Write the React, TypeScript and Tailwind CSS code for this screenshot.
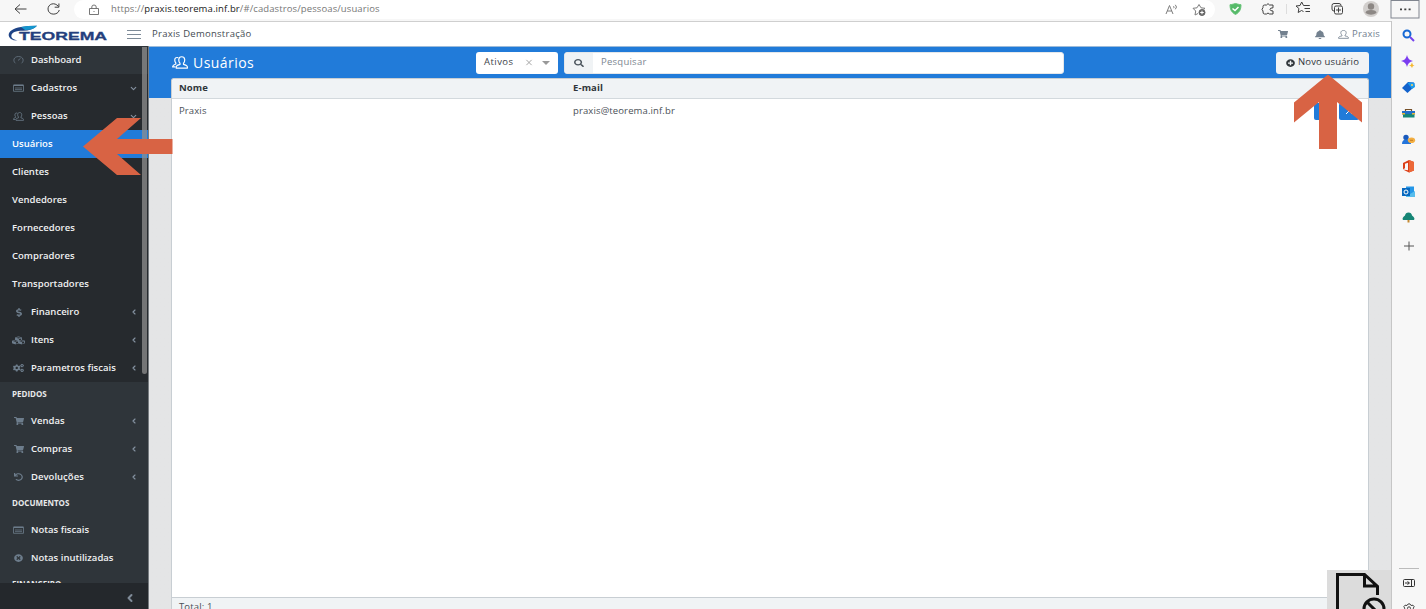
import * as React from "react";
import {
  FaBell,
  FaCogs,
  FaCubes,
  FaPlusCircle,
  FaSearch,
  FaShoppingCart,
  FaUndo,
  FaDollarSign,
  FaTimesCircle,
} from "react-icons/fa";
import { ChevronDown, ChevronLeft } from "lucide-react";

type IconProps = { className?: string; preserveAspectRatio?: string };

function PeopleIcon({ className }: IconProps) {
  return (
    <svg viewBox="0 0 16 14" preserveAspectRatio="none" fill="none" stroke="currentColor" strokeWidth="1.200" className={className}>
      <path d="M4.300 13h11c.5-2.400-.5-2.800-3.800-4V7.800c1-1 1.300-2.300 1.200-4C12.500 1.900 11.400.8 9.700.8S6.900 1.900 6.800 3.800c-.1 1.700.2 3 1.200 4V9c-3.300 1.200-4.200 1.600-3.700 4Z" />
      <path d="M6.300 1.800C4 1 2.600 2.400 2.800 4.700c0 1.300.3 2 1 2.700v1.100C1.500 9.500.4 10 .7 11.700h2.800" />
    </svg>
  );
}

function UserIcon({ className }: IconProps) {
  return (
    <svg viewBox="0 0 12 12" preserveAspectRatio="none" fill="none" stroke="currentColor" className={className}>
      <path d="M.6 11.100h10.800c.3-1.800-.8-2.300-3.800-3.300v-1C8.600 6 9 4.800 8.900 3.300 8.700 1.600 7.700.6 6 .6S3.300 1.600 3.100 3.300C3 4.800 3.400 6 4.400 6.800v1C1.400 8.800.3 9.300.6 11.100Z" />
    </svg>
  );
}

function GaugeIcon({ className }: IconProps) {
  return (
    <svg viewBox="0 0 11 9" preserveAspectRatio="none" fill="none" stroke="currentColor" strokeWidth=".8" className={className}>
      <path d="M2.500 8.200C-.5 5.500.7.600 5.500.600s6 4.900 3 7.600M5 5l2.500-2.300" />
    </svg>
  );
}

function CardIcon({ className }: IconProps) {
  return (
    <svg viewBox="0 0 11 8" preserveAspectRatio="none" fill="none" stroke="currentColor" className={className}>
      <path d="M.5 1.500h10v5.800H.5z" strokeWidth=".8" />
      <path d="M.5 1.200h10" strokeWidth="1.500" />
      <path d="M2 4h7M2 5.600h7" strokeWidth=".9" opacity=".8" />
    </svg>
  );
}

type NavItemProps = {
  label: string;
  icon?: React.ComponentType<IconProps>;
  iconSize?: string;
  chevron?: "down" | "left";
  active?: boolean;
};

function NavItem({ label, icon: Icon, iconSize = "h-[8px] w-[11px]", chevron, active }: NavItemProps) {
  return (
    <div
      className={`flex h-7 shrink-0 items-center pl-3 text-[9.5px] font-semibold tracking-[0.02px] ${
        active ? "bg-[#217bd9] text-white" : "text-[#f0f1f2]"
      }`}
    >
      {Icon && (
        <span className="mr-[6px] flex w-[13px] justify-center text-[#6d7d8c]">
          <Icon className={iconSize} preserveAspectRatio="none" />
        </span>
      )}
      <span className="whitespace-nowrap">{label}</span>
      {chevron && (
        <span className="mr-[10px] ml-auto text-[#8491a0]">
          {chevron === "down" ? (
            <ChevronDown size={9} strokeWidth={3} />
          ) : (
            <ChevronLeft size={8} strokeWidth={3.5} />
          )}
        </span>
      )}
    </div>
  );
}

function NavTitle({ children }: { children: React.ReactNode }) {
  return (
    <div className="flex h-[25px] shrink-0 items-center pb-[2px] pl-3 text-[8px] font-bold text-[#e8e9ea]">
      {children}
    </div>
  );
}

function Sidebar() {
  return (
    <aside className="relative -mt-px flex w-[149px] shrink-0 flex-col border-r border-[#777c80] bg-[#2f353a]">
      <nav className="flex h-[537px] flex-col overflow-hidden">
        <NavItem label="Dashboard" icon={GaugeIcon} />
        <div className="bg-[#262a2e]">
          <NavItem label="Cadastros" icon={CardIcon} chevron="down" />
          <NavItem label="Pessoas" icon={PeopleIcon} iconSize="h-[9px] w-[11px]" chevron="down" />
          <NavItem label="Usuários" active />
          <NavItem label="Clientes" />
          <NavItem label="Vendedores" />
          <NavItem label="Fornecedores" />
          <NavItem label="Compradores" />
          <NavItem label="Transportadores" />
          <NavItem label="Financeiro" icon={FaDollarSign} iconSize="h-[9px] w-[6px]" chevron="left" />
          <NavItem label="Itens" icon={FaCubes} iconSize="h-[9px] w-[13px]" chevron="left" />
          <NavItem label="Parametros fiscais" icon={FaCogs} chevron="left" />
        </div>
        <NavTitle>PEDIDOS</NavTitle>
        <NavItem label="Vendas" icon={FaShoppingCart} iconSize="h-[8px] w-[10px]" chevron="left" />
        <NavItem label="Compras" icon={FaShoppingCart} iconSize="h-[8px] w-[10px]" chevron="left" />
        <NavItem label="Devoluções" icon={FaUndo} iconSize="h-[8px] w-[9px]" chevron="left" />
        <NavTitle>DOCUMENTOS</NavTitle>
        <NavItem label="Notas fiscais" icon={CardIcon} />
        <NavItem label="Notas inutilizadas" icon={FaTimesCircle} iconSize="h-[8px] w-[9px]" />
        <NavTitle>FINANCEIRO</NavTitle>
      </nav>
      <div className="flex flex-1 items-center justify-end bg-[#24282c] pt-1 pr-3 text-[#7f8b98]">
        <ChevronLeft size={12} strokeWidth={4} />
      </div>
      <div className="absolute top-px right-px h-[327px] w-[5px] rounded-b bg-[#8f8f8f]/75" />
    </aside>
  );
}

function BrowserBar() {
  return (
    <div className="flex h-[21px] shrink-0 items-start bg-[#f7f7f7] text-[#404040]">
      <svg viewBox="0 0 74 21" fill="none" stroke="currentColor" className="h-[21px] w-[74px]">
        <path d="M26.500 9H15M20 4.500 15 9l5 4.500" />
        <path d="M58.500 6.500C54.500 1.500 48 4 48 9c0 6.500 10 6.800 11.300 1M58.900 3.500v3.700h-4.200" />
      </svg>
      <div className="flex h-[19px] w-[1141px] items-center rounded-[10px] bg-white pl-[14px]">
        <svg viewBox="0 0 12 12" fill="none" stroke="#686868" strokeWidth=".9" className="h-3 w-3">
          <path d="M1.500 4.500h9v6h-9zM3.800 4.500V3Q3.800 1 6 1t2.200 2v1.500M6 7v1" />
        </svg>
        <span className="ml-[11px] text-[9.5px] tracking-[0.11px] text-[#777]">
          https://<span className="text-[#202020]">praxis.teorema.inf.br</span>/#/cadastros/pessoas/usuarios
        </span>
        <svg viewBox="0 0 42 14" fill="none" stroke="#7d7d7d" className="mr-[8px] ml-auto h-[14px] w-[42px]">
          <path d="m1 11 3.500-8.500L8 11M2.300 8h4.500M8.500 3.200q1.200 1 0 2M10.300 1.800q2.400 2.200 0 4.500" />
          <path d="m33 10.500-3 1.500.7-4L28 5.300l4-.5L34 1.500l2 3.300 4 .5-1.500 1.400" />
          <circle cx="37" cy="9.500" r="3" fill="#666" stroke="#666" />
          <path d="M37 7.700v3.600M35.200 9.500h3.600" stroke="#fff" />
        </svg>
      </div>
      <svg viewBox="0 0 211 21" fill="none" stroke="currentColor" className="h-[21px] w-[211px]">
        <path d="M20.500 3.500c-3 .8-3.500 1-5.500 1.200 0 5 1.500 7.500 5.500 9.800 4-2.300 5.500-4.800 5.500-9.800-2-.2-2.500-.4-5.500-1.200Z" fill="#55b968" stroke="#69c57a" />
        <path d="m17.500 8.500 2.500 2 3.500-3.500" stroke="#fff" strokeWidth="1.500" />
        <path d="M49.500 5h2Q53 2.200 54.500 5H58v2.800q-3 0-3 1.600t3 1.600V14h-3.500q-1.500-2-3 0h-2q-1.500 0-1.500-2v-1Q46 9.500 48 7.500V6.500Q48 5 49.500 5Z" />
        <path d="M71.500 4v10" stroke="#ddd" />
        <path d="m88.500 11.500-2-1-3.300 2 .7-4L81 6l4-.5L86.700 2l1.800 3.500h6.300M89.500 8.500h5.500M90.500 11.500h4.500" />
        <path d="M119 11q-2 0-2-2V5.500q0-2 2-2h5q2 0 2 2" />
        <rect x="119.500" y="6" width="8" height="8" rx="1.500" />
        <path d="M123.500 7.500v5M121 10h5" />
        <circle cx="156" cy="9" r="8" fill="#d2cfcd" stroke="none" />
        <circle cx="156" cy="6.500" r="3.200" fill="#8c8784" stroke="none" />
        <path d="M150.500 13q0-3 5.500-3t5.500 3q-5.500 3.500-11 0Z" fill="#8c8784" stroke="none" />
        <rect x="176" y=".5" width="28" height="17.500" stroke="#80858f" />
        <path d="M185 9.300h2M189.300 9.300h2M193.600 9.300h2" strokeWidth="1.700" />
      </svg>
    </div>
  );
}

function Logo() {
  return (
    <svg viewBox="0 0 102 18" className="h-[18px] w-[102px]">
      <path d="M3 14C-2 10 1 4 13 2q7-1.300 16-1.300Q24 5.800 15 5.800C7 5.800 2.500 8 3.500 12q.5 2 6 3.500Q5 15.500 3 14Z" fill="#1e4386" />
      <path d="M13 2q6-1.300 16-1.300Q25 5.300 17 5Z" fill="#1696ce" />
      <text
        x="11"
        y="14.500"
        textLength="88"
        lengthAdjust="spacingAndGlyphs"
        fill="#243f7d"
        stroke="#243f7d"
        strokeWidth=".3"
        className="font-['Liberation_Sans',sans-serif] text-[11.500px] font-bold"
      >
        TEOREMA
      </text>
    </svg>
  );
}

function AppHeader() {
  return (
    <header className="flex h-[26px] shrink-0 items-center border-t border-b border-[#cfcfcf] border-b-[#9dbbd9] bg-white pl-2 text-[10px] text-[#5c6873]">
      <Logo />
      <div className="ml-[17px] flex w-[14px] flex-col gap-[3px]">
        <div className="h-px bg-[#7e8b98]" />
        <div className="h-px bg-[#7e8b98]" />
        <div className="h-px bg-[#7e8b98]" />
      </div>
      <span className="ml-[11px] text-[9.5px] tracking-[0.27px] text-[#444b52]">Praxis Demonstração</span>
      <div className="mr-[11px] ml-auto flex items-center text-[#73818f]">
        <FaShoppingCart preserveAspectRatio="none" className="h-[8px] w-[10px]" />
        <FaBell preserveAspectRatio="none" className="ml-[27px] h-[9px] w-[10px]" />
        <UserIcon className="ml-[13px] h-[9px] w-[11px]" />
        <span className="ml-[3px] text-[9.5px] tracking-[0.2px]">Praxis</span>
      </div>
    </header>
  );
}

function Toolbar() {
  return (
    <div className="flex h-[31px] shrink-0 items-center text-[10px]">
      <PeopleIcon className="h-[13px] w-4 text-white" />
      <h1 className="ml-[5px] w-[283px] pb-px text-[14px] tracking-[0.45px] text-white">Usuários</h1>
      <div className="flex h-[22px] w-[82px] items-center rounded-[3px] bg-white px-2 text-[9.5px] tracking-[0.45px] text-[#3c4349]">
        Ativos
        <svg viewBox="0 0 8 8" className="ml-auto h-[7px] w-[8px]" stroke="#999" fill="none">
          <path d="m1 1 6 6M7 1 1 7" />
        </svg>
        <span className="ml-[9px] border-x-4 border-t-4 border-x-transparent border-t-[#999]" />
      </div>
      <div className="ml-[6px] flex h-[22px] w-[500px] overflow-hidden rounded-[3px] border border-[#e4e7ea] bg-white text-[9.5px] tracking-[0.25px] text-[#7d8791]">
        <div className="flex w-7 items-center justify-center bg-[#f0f3f5] text-[#4d565e]">
          <FaSearch preserveAspectRatio="none" className="h-[8px] w-[10px]" />
        </div>
        <span className="flex items-center pl-2">Pesquisar</span>
      </div>
      <button className="ml-auto flex h-[22px] w-[93px] items-center justify-center gap-[3px] rounded-[3px] bg-[#f0f3f5] text-[9.5px] tracking-[0.15px] whitespace-nowrap text-[#30363b]">
        <FaPlusCircle preserveAspectRatio="none" className="h-[8px] w-[9px]" />
        Novo usuário
      </button>
    </div>
  );
}

function UsersCard() {
  return (
    <section className="-ml-px flex flex-1 flex-col rounded-t-[3px] border border-b-0 border-[#c8ced3] bg-white text-[9.5px] tracking-[0.13px] text-[#4a5057]">
      <div className="flex h-5 shrink-0 items-center rounded-t-[3px] border-b border-[#d3d9dd] bg-[#f0f3f5] pl-[7px] font-bold text-[#2f353a]">
        <span className="w-[394px]">Nome</span>
        <span>E-mail</span>
      </div>
      <div className="flex h-[24px] items-center pl-[7px]">
        <span className="w-[394px]">Praxis</span>
        <span>praxis@teorema.inf.br</span>
        <div className="mr-[9px] ml-auto flex gap-[2px]">
          <div className="h-[17px] w-[23px] rounded-[2px] bg-[#217bd9]" />
          <div className="flex h-[17px] w-5 items-center justify-center rounded-[2px] bg-[#217bd9]">
            <svg viewBox="0 0 8 8" className="h-2 w-2" fill="none" stroke="#fff">
              <path d="m1 1 6 6M7 1 1 7" />
            </svg>
          </div>
        </div>
      </div>
      <div className="mt-auto h-[12px] border-t border-[#c8ced3] bg-[#f0f3f5] pt-[2px] pl-[7px]">
        Total: 1
      </div>
    </section>
  );
}

function EdgeSidebar() {
  return (
    <div className="w-[35px] shrink-0 border-l border-[#c6c6c6] bg-[#f7f7f7]">
      <svg viewBox="0 0 34 588" fill="none" className="h-[588px] w-[34px]">
        <g transform="translate(10 8)" strokeWidth="2">
          <circle cx="5" cy="5" r="3.500" stroke="#1769d4" />
          <path d="m8 8 4 4" stroke="#7442ec" />
        </g>
        <path d="M15 34q1 5.300 6 6-5 .8-6 6-1-5.200-6-6 5-.7 6-6Z" fill="#7b3df0" />
        <path d="M20 41.500q.3 2.500 2.500 3-2.200.3-2.500 2.500-.5-2.200-3-2.500 2.500-.5 3-3Z" fill="#f5b933" />
        <path d="M10 67 16 61l6 .5.500 4-7 6.500Z" fill="#1262cc" />
        <path d="m15.500 62 4-.5 3 .5.500 4-3 2Z" fill="#1c9bed" />
        <circle cx="20" cy="64" r="1" fill="#ffd35a" />
        <path d="M13.500 90v-1.500h6V90" stroke="#765029" strokeWidth="1.200" />
        <path d="M10 90h13v3.500H10z" fill="#226fc7" />
        <path d="M11 93h11.500v3.500H11z" fill="#158778" />
        <path d="M10 92h3v1.500h-3zM20 92h3v1.500h-3z" fill="#e8b63c" />
        <circle cx="14" cy="116.500" r="2.700" fill="#195abd" />
        <path d="M10 123q0-4.500 4-4.500 5 0 5 4.500Z" fill="#2475db" />
        <ellipse cx="19.500" cy="119.300" rx="3.600" ry="2.800" fill="#f3af42" />
        <path d="M18 119.300h3" stroke="#c27a24" />
        <path d="m11 142 6-3 5 2v8.500l-5 2-6-3 5 .7v-7.500l-3 1v4.500l-2 1Z" fill="#dc3e17" />
        <path d="m17 139 5 2v8.500l-5 2Z" fill="#ec6838" />
        <path d="M14 165.500h8v9h-8z" fill="#2497e8" />
        <path d="m14 171 4 2 5-3v6h-9Z" fill="#58bdec" />
        <path d="M10 167h8v8h-8z" fill="#0969bf" />
        <circle cx="14" cy="171" r="2" stroke="#fff" />
        <path d="M16.500 191.500q3 0 3.500 3 3.500 2.500 2 4.500H11q-1.500-2 2-4.500.5-3 3.500-3Z" fill="#168575" />
        <path d="M15.500 199h2v2.500h-2z" fill="#c58a32" />
        <path d="M12 225h10M17 220.500v9" stroke="#555" />
        <path d="M7 547.500h20" stroke="#bbb" />
        <rect x="11.500" y="558.500" width="11" height="7" rx="1" stroke="#333" />
        <path d="M19.500 559v6M13 562h4M15.500 560.500l2 1.500-2 1.500" stroke="#333" />
        <path d="m16 583 2-.1 1 1.600 2-.3 1.200 1.500-1 1.500 1 1.500-1.200 1.500-2-.3-1 1.500h-2l-1-1.500-2 .3-1.200-1.500 1-1.500-1-1.500 1.200-1.500 2 .3Z" stroke="#444" />
        <circle cx="17" cy="587.300" r="1.500" stroke="#444" />
      </svg>
    </div>
  );
}

function PointerArrows() {
  return (
    <svg viewBox="0 0 1426 609" fill="#d86344" className="pointer-events-none absolute inset-0 h-[609px] w-[1426px]">
      <path d="m83 146.500 34-28.500h24l-24 21h55.500v15H117l24 21h-24Z" />
      <path d="m1328 74.500 34 28v20L1337 102v47h-18v-47l-25 20.500v-20Z" />
    </svg>
  );
}

function NoFileBadge() {
  return (
    <div className="absolute top-[570px] left-[1327px] h-[39px] w-16 overflow-hidden bg-[#dcdcdc]">
      <svg viewBox="0 0 64 39" fill="none" stroke="#111" strokeWidth="3" className="h-[39px] w-16">
        <path d="M10.500 40V4.500h27l13 12V25M37.500 5v11h13" />
        <circle cx="47" cy="39" r="10" />
        <path d="m40 32 14 14" />
      </svg>
    </div>
  );
}

export default function App() {
  return (
    <div className="relative flex h-[609px] w-[1426px] flex-col overflow-hidden bg-white font-['Open_Sans',sans-serif]">
      <BrowserBar />
      <div className="flex flex-1">
        <div className="flex flex-1 flex-col">
          <AppHeader />
          <div className="flex flex-1">
            <Sidebar />
            <main className="flex flex-1 flex-col bg-[#e4e5e6] bg-linear-to-b from-[#217bd9] from-[51px] to-[#e4e5e6] to-[51px] pr-[22px] pl-[23px]">
              <Toolbar />
              <UsersCard />
            </main>
          </div>
        </div>
        <EdgeSidebar />
      </div>
      <NoFileBadge />
      <PointerArrows />
    </div>
  );
}
